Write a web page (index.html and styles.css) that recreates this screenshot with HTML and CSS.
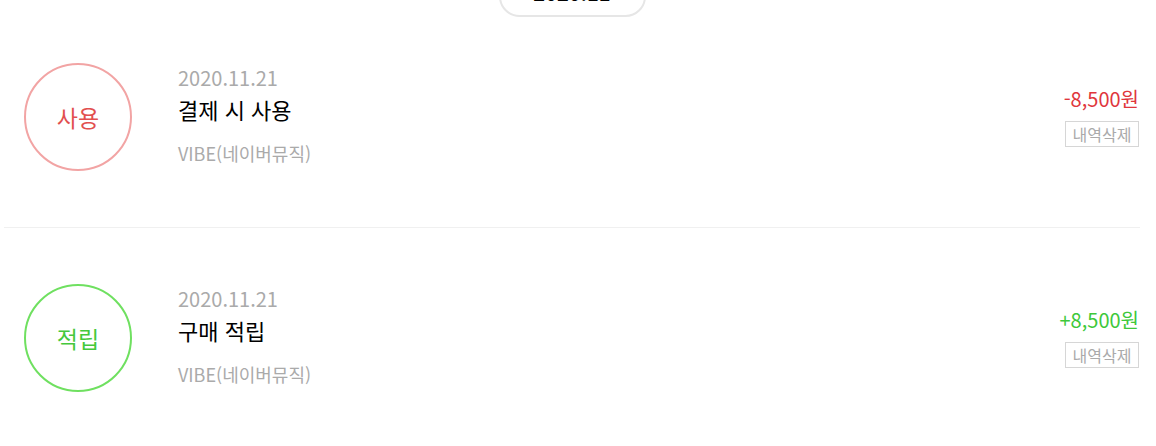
FILE: index.html
```html
<!DOCTYPE html>
<html lang="ko">
<head>
<meta charset="utf-8">
<link rel="stylesheet" href="styles.css">
</head>
<body>
<div class="page">
  <div class="month-wrap">
    <div class="month-pill">2020.11</div>
  </div>
  <ul class="history">
    <li class="item">
      <div class="badge badge-use">사용</div>
      <div class="info">
        <div class="date">2020.11.21</div>
        <div class="title">결제 시 사용</div>
        <div class="source">VIBE(네이버뮤직)</div>
      </div>
      <div class="side">
        <div class="amount amount-minus">-8,500원</div>
        <button class="del">내역삭제</button>
      </div>
    </li>
    <li class="item">
      <div class="badge badge-save">적립</div>
      <div class="info">
        <div class="date">2020.11.21</div>
        <div class="title">구매 적립</div>
        <div class="source">VIBE(네이버뮤직)</div>
      </div>
      <div class="side">
        <div class="amount amount-plus">+8,500원</div>
        <button class="del">내역삭제</button>
      </div>
    </li>
  </ul>
</div>
</body>
</html>
```
FILE: styles.css
```css
* { box-sizing: border-box; }
html, body { margin: 0; padding: 0; background: #fff; }
body {
  font-family: "Noto Sans CJK KR", "Noto Sans", sans-serif;
  overflow: hidden;
}
.page {
  margin: 0 16px 0 4px;
}
.month-wrap {
  display: flex;
  justify-content: center;
  margin-top: -24px;
}
.month-pill {
  width: 147px;
  height: 41px;
  border: 2px solid #e6e6e6;
  border-radius: 22px;
  display: flex;
  align-items: center;
  justify-content: center;
  padding-bottom: 8px;
  font-size: 20px;
  font-weight: 700;
  color: #000;
  background: #fff;
}
.history {
  list-style: none;
  margin: -10px 0 0;
  padding: 0;
}
.item {
  display: flex;
  align-items: center;
  padding: 56px 1px 56px 20px;
  border-bottom: 1px solid #f0f0f0;
}
.item:last-child { border-bottom: none; }
.badge {
  width: 108px;
  height: 108px;
  border-radius: 50%;
  border: 2px solid;
  display: flex;
  align-items: center;
  justify-content: center;
  font-size: 23px;
  flex: none;
}
.badge-use { border-color: #f2a4a4; color: #e2504f; }
.badge-save { border-color: #6fe060; color: #45c83c; }
.info {
  flex: 1;
  margin-left: 46px;
  display: flex;
  flex-direction: column;
  padding-bottom: 3px;
}
.date {
  font-size: 20px;
  color: #aaa;
  line-height: 24px;
  margin-bottom: 4px;
}
.title {
  font-size: 22px;
  color: #000;
  line-height: 30px;
}
.source {
  font-size: 18px;
  color: #aaa;
  line-height: 24px;
  margin-top: 17px;
}
.side {
  display: flex;
  flex-direction: column;
  align-items: flex-end;
  gap: 10px;
}
.amount {
  font-size: 20px;
  line-height: 24px;
}
.amount-minus { color: #e0363c; }
.amount-plus { color: #3ec83a; }
.del {
  font-family: inherit;
  font-size: 16px;
  color: #aaa;
  background: #fff;
  border: 1px solid #d6d6d6;
  height: 26px;
  width: 74px;
  padding: 0;
  line-height: 24px;
  margin: 0;
  text-align: center;
}
```
